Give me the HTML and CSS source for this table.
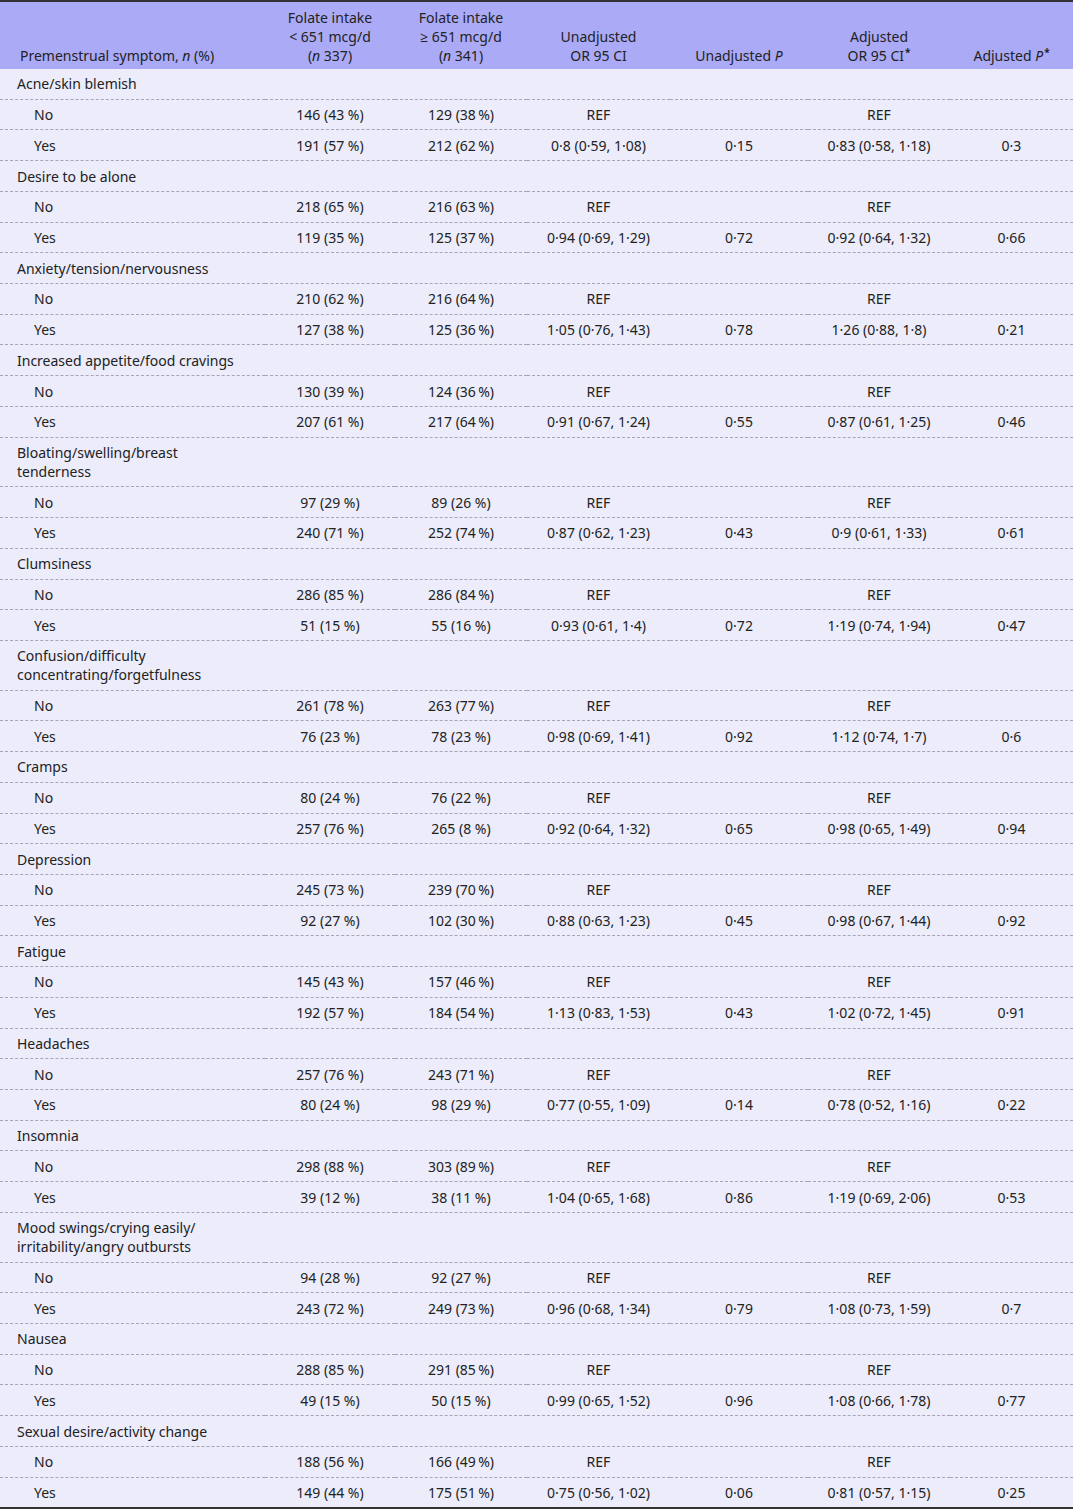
FILE: index.html
```html
<!DOCTYPE html>
<html>
<head>
<meta charset="utf-8">
<link rel="stylesheet" href="styles.css">
</head>
<body>
<table class="tbl">
<colgroup>
<col class="c1"><col class="c2"><col class="c3"><col class="c4"><col class="c5"><col class="c6"><col class="c7">
</colgroup>
<thead>
<tr>
<th class="lab">Premenstrual symptom, <i>n</i> (%)</th>
<th>Folate intake<br>&lt; 651 mcg/d<br>(<i>n</i> 337)</th>
<th>Folate intake<br>≥ 651 mcg/d<br>(<i>n</i> 341)</th>
<th>Unadjusted<br>OR 95 CI</th>
<th>Unadjusted <i>P</i></th>
<th>Adjusted<br>OR 95 CI<sup>*</sup></th>
<th>Adjusted <i>P</i><sup>*</sup></th>
</tr>
</thead>
<tbody>
<tr class="grp"><td class="lab">Acne/skin blemish</td><td></td><td></td><td></td><td></td><td></td><td></td></tr>
<tr><td class="sub">No</td><td>146 (43 %)</td><td>129 (38&#8201;%)</td><td>REF</td><td></td><td>REF</td><td></td></tr>
<tr><td class="sub">Yes</td><td>191 (57 %)</td><td>212 (62&#8201;%)</td><td>0·8 (0·59, 1·08)</td><td>0·15</td><td>0·83 (0·58, 1·18)</td><td>0·3</td></tr>

<tr class="grp"><td class="lab">Desire to be alone</td><td></td><td></td><td></td><td></td><td></td><td></td></tr>
<tr><td class="sub">No</td><td>218 (65 %)</td><td>216 (63&#8201;%)</td><td>REF</td><td></td><td>REF</td><td></td></tr>
<tr><td class="sub">Yes</td><td>119 (35 %)</td><td>125 (37&#8201;%)</td><td>0·94 (0·69, 1·29)</td><td>0·72</td><td>0·92 (0·64, 1·32)</td><td>0·66</td></tr>

<tr class="grp"><td class="lab">Anxiety/tension/nervousness</td><td></td><td></td><td></td><td></td><td></td><td></td></tr>
<tr><td class="sub">No</td><td>210 (62 %)</td><td>216 (64&#8201;%)</td><td>REF</td><td></td><td>REF</td><td></td></tr>
<tr><td class="sub">Yes</td><td>127 (38 %)</td><td>125 (36&#8201;%)</td><td>1·05 (0·76, 1·43)</td><td>0·78</td><td>1·26 (0·88, 1·8)</td><td>0·21</td></tr>

<tr class="grp"><td class="lab">Increased appetite/food cravings</td><td></td><td></td><td></td><td></td><td></td><td></td></tr>
<tr><td class="sub">No</td><td>130 (39 %)</td><td>124 (36&#8201;%)</td><td>REF</td><td></td><td>REF</td><td></td></tr>
<tr><td class="sub">Yes</td><td>207 (61 %)</td><td>217 (64&#8201;%)</td><td>0·91 (0·67, 1·24)</td><td>0·55</td><td>0·87 (0·61, 1·25)</td><td>0·46</td></tr>

<tr class="grp"><td class="lab">Bloating/swelling/breast<br>tenderness</td><td></td><td></td><td></td><td></td><td></td><td></td></tr>
<tr><td class="sub">No</td><td>97 (29 %)</td><td>89 (26 %)</td><td>REF</td><td></td><td>REF</td><td></td></tr>
<tr><td class="sub">Yes</td><td>240 (71 %)</td><td>252 (74&#8201;%)</td><td>0·87 (0·62, 1·23)</td><td>0·43</td><td>0·9 (0·61, 1·33)</td><td>0·61</td></tr>

<tr class="grp"><td class="lab">Clumsiness</td><td></td><td></td><td></td><td></td><td></td><td></td></tr>
<tr><td class="sub">No</td><td>286 (85 %)</td><td>286 (84&#8201;%)</td><td>REF</td><td></td><td>REF</td><td></td></tr>
<tr><td class="sub">Yes</td><td>51 (15 %)</td><td>55 (16 %)</td><td>0·93 (0·61, 1·4)</td><td>0·72</td><td>1·19 (0·74, 1·94)</td><td>0·47</td></tr>

<tr class="grp"><td class="lab">Confusion/difficulty<br>concentrating/forgetfulness</td><td></td><td></td><td></td><td></td><td></td><td></td></tr>
<tr><td class="sub">No</td><td>261 (78 %)</td><td>263 (77&#8201;%)</td><td>REF</td><td></td><td>REF</td><td></td></tr>
<tr><td class="sub">Yes</td><td>76 (23 %)</td><td>78 (23 %)</td><td>0·98 (0·69, 1·41)</td><td>0·92</td><td>1·12 (0·74, 1·7)</td><td>0·6</td></tr>

<tr class="grp"><td class="lab">Cramps</td><td></td><td></td><td></td><td></td><td></td><td></td></tr>
<tr><td class="sub">No</td><td>80 (24 %)</td><td>76 (22 %)</td><td>REF</td><td></td><td>REF</td><td></td></tr>
<tr><td class="sub">Yes</td><td>257 (76 %)</td><td>265 (8 %)</td><td>0·92 (0·64, 1·32)</td><td>0·65</td><td>0·98 (0·65, 1·49)</td><td>0·94</td></tr>

<tr class="grp"><td class="lab">Depression</td><td></td><td></td><td></td><td></td><td></td><td></td></tr>
<tr><td class="sub">No</td><td>245 (73 %)</td><td>239 (70&#8201;%)</td><td>REF</td><td></td><td>REF</td><td></td></tr>
<tr><td class="sub">Yes</td><td>92 (27 %)</td><td>102 (30&#8201;%)</td><td>0·88 (0·63, 1·23)</td><td>0·45</td><td>0·98 (0·67, 1·44)</td><td>0·92</td></tr>

<tr class="grp"><td class="lab">Fatigue</td><td></td><td></td><td></td><td></td><td></td><td></td></tr>
<tr><td class="sub">No</td><td>145 (43 %)</td><td>157 (46&#8201;%)</td><td>REF</td><td></td><td>REF</td><td></td></tr>
<tr><td class="sub">Yes</td><td>192 (57 %)</td><td>184 (54&#8201;%)</td><td>1·13 (0·83, 1·53)</td><td>0·43</td><td>1·02 (0·72, 1·45)</td><td>0·91</td></tr>

<tr class="grp"><td class="lab">Headaches</td><td></td><td></td><td></td><td></td><td></td><td></td></tr>
<tr><td class="sub">No</td><td>257 (76 %)</td><td>243 (71&#8201;%)</td><td>REF</td><td></td><td>REF</td><td></td></tr>
<tr><td class="sub">Yes</td><td>80 (24 %)</td><td>98 (29 %)</td><td>0·77 (0·55, 1·09)</td><td>0·14</td><td>0·78 (0·52, 1·16)</td><td>0·22</td></tr>

<tr class="grp"><td class="lab">Insomnia</td><td></td><td></td><td></td><td></td><td></td><td></td></tr>
<tr><td class="sub">No</td><td>298 (88 %)</td><td>303 (89&#8201;%)</td><td>REF</td><td></td><td>REF</td><td></td></tr>
<tr><td class="sub">Yes</td><td>39 (12 %)</td><td>38 (11 %)</td><td>1·04 (0·65, 1·68)</td><td>0·86</td><td>1·19 (0·69, 2·06)</td><td>0·53</td></tr>

<tr class="grp"><td class="lab">Mood swings/crying easily/<br>irritability/angry outbursts</td><td></td><td></td><td></td><td></td><td></td><td></td></tr>
<tr><td class="sub">No</td><td>94 (28 %)</td><td>92 (27 %)</td><td>REF</td><td></td><td>REF</td><td></td></tr>
<tr><td class="sub">Yes</td><td>243 (72 %)</td><td>249 (73&#8201;%)</td><td>0·96 (0·68, 1·34)</td><td>0·79</td><td>1·08 (0·73, 1·59)</td><td>0·7</td></tr>

<tr class="grp"><td class="lab">Nausea</td><td></td><td></td><td></td><td></td><td></td><td></td></tr>
<tr><td class="sub">No</td><td>288 (85 %)</td><td>291 (85&#8201;%)</td><td>REF</td><td></td><td>REF</td><td></td></tr>
<tr><td class="sub">Yes</td><td>49 (15 %)</td><td>50 (15 %)</td><td>0·99 (0·65, 1·52)</td><td>0·96</td><td>1·08 (0·66, 1·78)</td><td>0·77</td></tr>

<tr class="grp"><td class="lab">Sexual desire/activity change</td><td></td><td></td><td></td><td></td><td></td><td></td></tr>
<tr><td class="sub">No</td><td>188 (56 %)</td><td>166 (49&#8201;%)</td><td>REF</td><td></td><td>REF</td><td></td></tr>
<tr class="last"><td class="sub">Yes</td><td>149 (44 %)</td><td>175 (51&#8201;%)</td><td>0·75 (0·56, 1·02)</td><td>0·06</td><td>0·81 (0·57, 1·15)</td><td>0·25</td></tr>
</tbody>
</table>
</body>
</html>
```

FILE: styles.css
```css
html, body {
  margin: 0;
  padding: 0;
  background: #ffffff;
}

.tbl {
  width: 1073px;
  border-collapse: collapse;
  table-layout: fixed;
  font-family: "Noto Sans", "Open Sans", sans-serif;
  font-size: 14px;
  line-height: 19px;
  color: #222222;
  background: #ececfb;
  border-top: 2px solid #333333;
  border-bottom: 2px solid #333333;
}

.c1 { width: 265px; }
.c2 { width: 130px; }
.c3 { width: 132px; }
.c4 { width: 143px; }
.c5 { width: 138px; }
.c6 { width: 142px; }
.c7 { width: 123px; }

.tbl th {
  background: #abaaf6;
  font-weight: normal;
  text-align: center;
  vertical-align: bottom;
  padding: 6px 0 4px 0;
}

.tbl th.lab {
  text-align: left;
  padding-left: 20px;
}

.tbl sup {
  font-size: 10px;
  font-weight: bold;
  line-height: 0;
  vertical-align: 5px;
  margin-left: 1px;
}

.tbl td {
  text-align: center;
  padding: 5.37px 0;
  border-bottom: 1px dashed #a5a5b5;
  white-space: nowrap;
}

.tbl td.lab {
  text-align: left;
  padding-left: 17px;
}

.tbl td.sub {
  text-align: left;
  padding-left: 34px;
}

.tbl tr.last td {
  border-bottom: none;
}
```
